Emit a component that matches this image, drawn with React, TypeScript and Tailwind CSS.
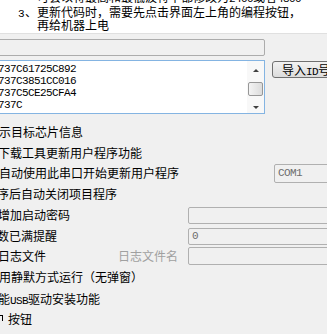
import React from "react";

const cjk = "font-['Noto_Sans_CJK_SC',sans-serif]";
const mono = "font-['Liberation_Mono',monospace] text-[11px] tracking-[-0.6px] leading-none";

function Edit({ w, h, text, className = "" }: { w: number; h: number; text?: string; className?: string }) {
  return (
    <div
      className={`shrink-0 rounded-[2px] border border-[#b0b0b0] bg-[#f0f0f0] flex items-center pl-[3px] text-[#6d6d6d] ${mono} ${className}`}
      style={{ width: w, height: h }}
    >
      {text}
    </div>
  );
}

export default function App() {
  const ids = ["F737C61725C892", "F737C3851CC016", "F737C5CE25CFA4", "F737C"];
  return (
    <div className={`w-[327px] h-[334px] overflow-hidden bg-[#f0f0f0] text-black text-[12px] ${cjk}`}>
      {/* top note area */}
      <div className="h-[34px] bg-white border-b border-[#e0e0e0] overflow-hidden">
        <div className="mt-[-10px] whitespace-nowrap">
          <div className="pl-[37px] h-[13px] leading-[13px]">
            可会以将最高和最低波特率都修改为<span className={mono}>2400</span>或者<span className={mono}>4800</span>
          </div>
          <div className="h-[13px] leading-[13px] mt-[2px] pl-[18px]">
            <span className={`inline-block w-[7px] ${mono}`}>3</span>
            <span className="inline-block w-[12px]">、</span>
            更新代码时，需要先点击界面左上角的编程按钮，
          </div>
          <div className="pl-[37px] h-[13px] leading-[13px]">再给机器上电</div>
        </div>
      </div>

      {/* top edit */}
      <div className="mt-[5px] ml-[-3px] w-[268px] h-[17px] rounded-[2px] border border-[#acacac] bg-[#f0f0f0]" />

      {/* listbox + button */}
      <div className="mt-[4px] flex items-start">
        <div className="ml-[-3px] w-[268px] h-[54px] border border-[#84b4e2] bg-white flex shrink-0">
          <div className="flex-1 overflow-hidden pt-[2px]">
            {ids.map((t) => (
              <div
                key={t}
                className="ml-[-6px] h-[12px] leading-[12px] whitespace-nowrap font-['Liberation_Mono',monospace] text-[11px] tracking-[-0.6px]"
              >
                {t}
              </div>
            ))}
          </div>
          <div className="w-[17px] shrink-0 bg-[#f8f8f8] flex flex-col items-center">
            <div className="mt-[8px] w-0 h-0 border-l-[3px] border-r-[3px] border-b-[3px] border-l-transparent border-r-transparent border-b-[#404040]" />
            <div className="mt-[10px] w-[15px] h-[14px] rounded-[2px] border border-[#979797] bg-gradient-to-r from-[#f4f4f4] to-[#dcdcdc]" />
            <div className="mt-[10px] w-0 h-0 border-l-[3px] border-r-[3px] border-t-[3px] border-l-transparent border-r-transparent border-t-[#404040]" />
          </div>
        </div>
        <div className="ml-[7px] mt-[1px] h-[17px] w-[80px] shrink-0 rounded-[3px] border border-[#707070] bg-gradient-to-b from-[#f2f2f2] to-[#dcdcdc] pl-[9px] whitespace-nowrap leading-[15px]">
          导入<span className={mono}>ID</span>号
        </div>
      </div>

      {/* option rows */}
      <div className="mt-[7px] flex flex-col whitespace-nowrap">
        <div className="h-[21px] flex items-center">
          <span className="ml-[-1px]">示目标芯片信息</span>
        </div>
        <div className="h-[21px] flex items-center">
          <span className="ml-[-2px]">下载工具更新用户程序功能</span>
        </div>
        <div className="h-[20px] flex items-center">
          <span className="ml-[-1px] w-[275px] shrink-0">自动使用此串口开始更新用户程序</span>
          <Edit w={60} h={19} text="COM1" />
        </div>
        <div className="h-[21px] flex items-center">
          <span className="ml-[-3px]">序后自动关闭项目程序</span>
        </div>
        <div className="h-[22px] flex items-center">
          <span className="ml-[-2px] w-[190px] shrink-0">增加启动密码</span>
          <Edit w={150} h={17} />
        </div>
        <div className="h-[20px] flex items-center">
          <span className="ml-[-3px] w-[191px] shrink-0">数已满提醒</span>
          <Edit w={150} h={17} text="0" />
        </div>
        <div className="h-[20px] flex items-center">
          <span className="ml-[-2px] w-[120px] shrink-0">日志文件</span>
          <span className="w-[70px] shrink-0 text-[#a0a0a0]">日志文件名</span>
          <Edit w={150} h={18} />
        </div>
        <div className="h-[22px] flex items-center">
          <span className="ml-[-1px]">用静默方式运行（无弹窗）</span>
        </div>
        <div className="h-[21px] flex items-center">
          <span className="ml-[-2px]">
            能<span className={mono}>USB</span>驱动安装功能
          </span>
        </div>
        <div className="h-[19px] flex items-center">
          <span className="self-start mt-[6px] ml-[-1px] w-[4px] h-[6px] border-t border-r border-black shrink-0" />
          <span className="ml-[5px]">按钮</span>
        </div>
      </div>
    </div>
  );
}
